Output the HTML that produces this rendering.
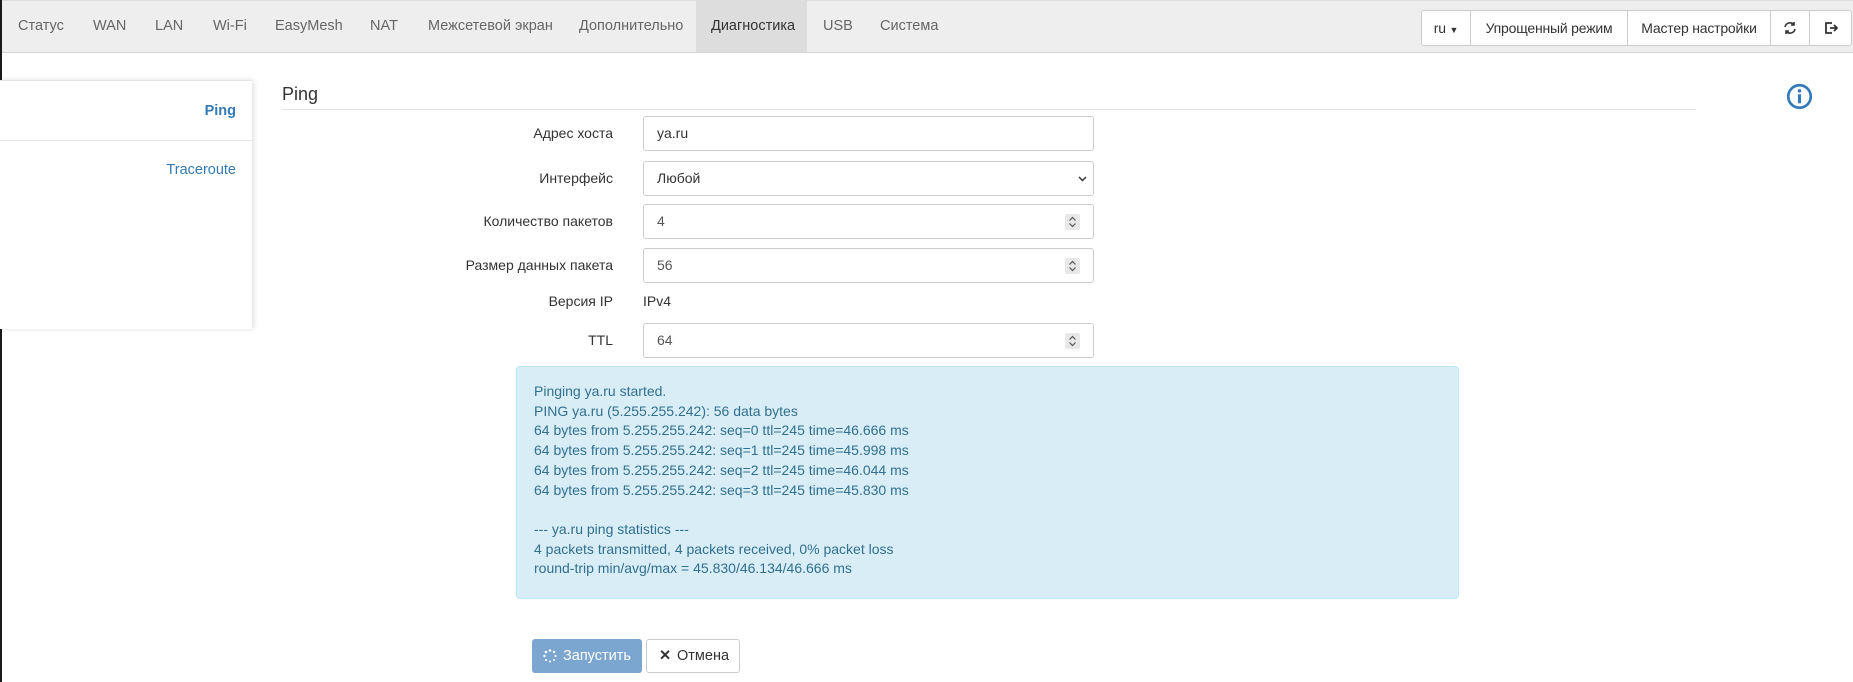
<!DOCTYPE html>
<html><head><meta charset="utf-8"><style>
*{box-sizing:border-box}
body{margin:0;width:1853px;height:682px;overflow:hidden;background:#fff;font-family:"Liberation Sans",sans-serif;font-size:14px;color:#333;position:relative}
.lb{position:absolute;left:0;top:0;width:2px;height:682px;background:#1a1a1a}
.nav{position:absolute;left:2px;top:0;width:1851px;height:53px;background:#eee;border-bottom:1px solid #d4d4d4;border-top:1px solid #ddd}
.nav a{position:absolute;top:0;height:51px;line-height:51px;color:#666;font-size:14.5px;white-space:nowrap}
.nav a.act{background:#ddd;color:#333}
.btns{position:absolute;left:1419px;top:9px;height:36px;display:flex;border:1px solid #ccc;border-radius:3px;background:#fff;white-space:nowrap}
.btns div{flex:none;height:34px;line-height:34px;text-align:center;border-left:1px solid #ccc;color:#333;font-size:14px;letter-spacing:-0.2px}
.btns div:first-child{border-left:none}
.side{position:absolute;left:0;top:80px;width:252px;height:249px;background:#fff;box-shadow:2px 0 5px rgba(0,0,0,.12);border-top:1px solid #e5e5e5}
.side div{height:60px;border-bottom:1px solid #e5e5e5;text-align:right;padding-right:16px;line-height:60px;color:#337ab7;font-size:14.5px}
h3{position:absolute;left:282px;top:84px;margin:0;font-weight:normal;font-size:18px;width:1414px;border-bottom:1px solid #e5e5e5;padding-bottom:4px;color:#333}
.lab{position:absolute;right:1240px;text-align:right;color:#333}
.inp{position:absolute;left:643px;width:451px;height:35px;border:1px solid #ccc;border-radius:3px;padding:0 13px;line-height:33px;color:#555}
.sp{position:absolute;right:13px;top:9px;width:15px;height:16px;background:#e8e8e8;border-radius:2px}
.sp svg{position:absolute;left:3px;top:2px}
.alert{position:absolute;left:516px;top:366px;width:943px;height:233px;background:#d9edf7;border:1px solid #bce8f1;border-radius:4px;padding:15px 17px;color:#31708f;line-height:19.7px;font-size:14px}
.b1{position:absolute;left:532px;top:639px;width:110px;height:34px;background:#7ba6cf;border-radius:3px;color:#fff;line-height:34px;padding-left:31px;font-size:14.5px}
.b2{position:absolute;left:646px;top:639px;width:94px;height:34px;border:1px solid #ccc;border-radius:3px;line-height:32px;padding-left:30px;color:#333;font-size:14.5px}
</style></head><body>
<div class="lb"></div>
<div class="nav">
<a style="left:16px">Статус</a><a style="left:91px">WAN</a><a style="left:153px">LAN</a><a style="left:211px">Wi-Fi</a><a style="left:273px">EasyMesh</a><a style="left:368px">NAT</a><a style="left:426px">Межсетевой экран</a><a style="left:577px">Дополнительно</a>
<a class="act" style="left:694px;width:111px;padding-left:15px">Диагностика</a><a style="left:821px">USB</a><a style="left:878px">Система</a>
<div class="btns"><div style="width:48px">ru <span style="font-size:9px">▼</span></div><div style="width:157px">Упрощенный режим</div><div style="width:143px">Мастер настройки</div><div style="width:39px;padding-top:2px"><svg width="14" height="14" viewBox="0 0 14 14" fill="none" stroke="#333" stroke-width="1.6"><path d="M2 6A5 5 0 0 1 11 4M12 8A5 5 0 0 1 3 10"/><path d="M11 1v3H8M3 13v-3h3"/></svg></div><div style="width:42px;padding-top:2px"><svg width="14" height="14" viewBox="0 0 14 14" fill="none" stroke="#333" stroke-width="1.8"><path d="M8 2H2v10h6M6 7h7M10 4l3 3-3 3"/></svg></div></div>
</div>
<div class="side"><div style="font-weight:bold">Ping</div><div style="border:none;line-height:58px">Traceroute</div></div>
<h3>Ping</h3>
<svg style="position:absolute;left:1786px;top:83px" width="27" height="27" viewBox="0 0 24 24"><circle cx="12" cy="12" r="10" fill="none" stroke="#337ab7" stroke-width="2.4"/><circle cx="12" cy="7" r="1.6" fill="#337ab7"/><rect x="10.6" y="10" width="2.8" height="8" fill="#337ab7"/></svg>
<div class="lab" style="top:125px">Адрес хоста</div><div class="inp" style="top:116px;color:#333">ya.ru</div>
<div class="lab" style="top:170px">Интерфейс</div><div class="inp" style="top:161px;color:#333">Любой<svg style="position:absolute;right:6px;top:14px" width="9" height="6" viewBox="0 0 9 6" fill="none" stroke="#333" stroke-width="1.5"><path d="M1 1l3.5 3.5L8 1"/></svg></div>
<div class="lab" style="top:213px">Количество пакетов</div><div class="inp" style="top:204px">4<span class="sp"><svg width="9" height="12" viewBox="0 0 9 12" fill="none" stroke="#555" stroke-width="1.2"><path d="M1.5 4.5L4.5 1.5 7.5 4.5M1.5 7.5l3 3 3-3"/></svg></span></div>
<div class="lab" style="top:257px">Размер данных пакета</div><div class="inp" style="top:248px">56<span class="sp"><svg width="9" height="12" viewBox="0 0 9 12" fill="none" stroke="#555" stroke-width="1.2"><path d="M1.5 4.5L4.5 1.5 7.5 4.5M1.5 7.5l3 3 3-3"/></svg></span></div>
<div class="lab" style="top:293px">Версия IP</div><div style="position:absolute;left:643px;top:293px">IPv4</div>
<div class="lab" style="top:332px">TTL</div><div class="inp" style="top:323px">64<span class="sp"><svg width="9" height="12" viewBox="0 0 9 12" fill="none" stroke="#555" stroke-width="1.2"><path d="M1.5 4.5L4.5 1.5 7.5 4.5M1.5 7.5l3 3 3-3"/></svg></span></div>
<div class="alert">Pinging ya.ru started.<br>PING ya.ru (5.255.255.242): 56 data bytes<br>64 bytes from 5.255.255.242: seq=0 ttl=245 time=46.666 ms<br>64 bytes from 5.255.255.242: seq=1 ttl=245 time=45.998 ms<br>64 bytes from 5.255.255.242: seq=2 ttl=245 time=46.044 ms<br>64 bytes from 5.255.255.242: seq=3 ttl=245 time=45.830 ms<br><br>--- ya.ru ping statistics ---<br>4 packets transmitted, 4 packets received, 0% packet loss<br>round-trip min/avg/max = 45.830/46.134/46.666 ms</div>
<div class="b1"><svg style="position:absolute;left:11px;top:10px" width="14" height="14" viewBox="0 0 14 14" fill="#fff"><circle cx="7" cy="1.5" r="1.3"/><circle cx="11" cy="3" r="1.2"/><circle cx="12.5" cy="7" r="1.1"/><circle cx="11" cy="11" r="1"/><circle cx="7" cy="12.5" r="1"/><circle cx="3" cy="11" r="1.1"/><circle cx="1.5" cy="7" r="1.2"/><circle cx="3" cy="3" r="1.3"/></svg>Запустить</div>
<div class="b2"><span style="position:absolute;left:12px;font-weight:bold">✕</span>Отмена</div>
</body></html>
